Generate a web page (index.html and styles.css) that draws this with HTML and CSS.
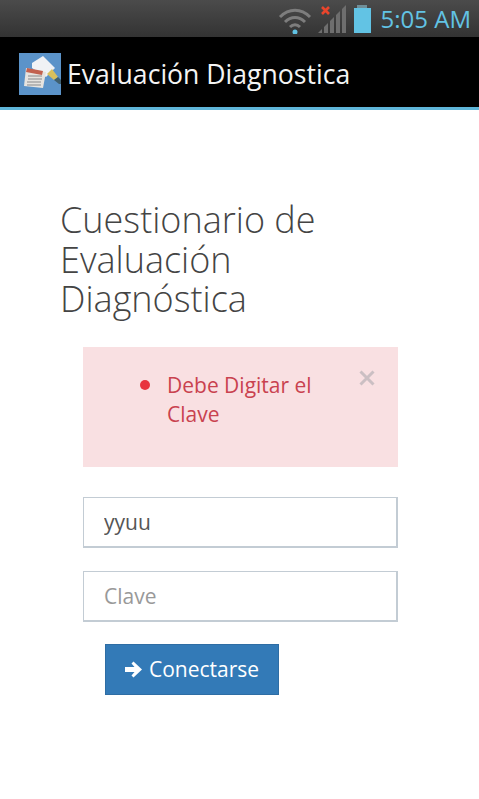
FILE: index.html
```html
<!DOCTYPE html>
<html lang="es">
<head>
  <meta charset="UTF-8" />
  <title>Evaluación Diagnostica</title>
  <meta name="viewport" content="width=device-width, initial-scale=1.0" />
  <link rel="stylesheet" href="styles.css">
</head>
<body>

  <!-- Status bar -->
  <div class="status-bar">
    <svg class="wifi" width="34" height="28" viewBox="0 0 34 28" fill="none">
      <path d="M2 11C11 2 23 2 32 11" stroke="#7d7d7d" stroke-width="3"/>
      <path d="M7 16C13 10 21 10 27 16" stroke="#7d7d7d" stroke-width="3"/>
      <path d="M12 21C15 18 19 18 22 21" stroke="#7d7d7d" stroke-width="3"/>
      <circle cx="17" cy="26" r="2.5" fill="#62c3e4"/>
    </svg>
    <svg class="signal" width="30" height="30" viewBox="0 0 30 30">
      <path d="M1 28L5 24V28Z" fill="#6e6e6e"/>
      <path d="M7 28V22L11 18V28Z" fill="#6e6e6e"/>
      <path d="M13 28V16L17 12V28Z" fill="#6e6e6e"/>
      <path d="M19 28V10L23 6V28Z" fill="#6e6e6e"/>
      <path d="M25 28V4L29 0V28Z" fill="#6e6e6e"/>
      <path d="M5 2L12 9M12 2L5 9" stroke="#e8452c" stroke-width="2.6"/>
    </svg>
    <div class="battery">
      <span class="battery-cap"></span>
      <span class="battery-body"></span>
    </div>
    <span class="clock">5:05 AM</span>
  </div>

  <!-- Action bar -->
  <header class="action-bar">
    <svg class="app-icon" width="42" height="42" viewBox="0 0 42 42">
      <rect width="42" height="42" fill="#5b93c9"/>
      <path d="M13 10L24 3L36 15L27 24L13 15Z" fill="#f0f2f5"/>
      <path d="M7 15L27 19L24 35L5 33Z" fill="#e6e3df"/>
      <path d="M8 15L24 18L23 22L7 19Z" fill="#c2614f"/>
      <path d="M9 23H23M9 26H23M8 29H22M8 32H22" stroke="#a8a8a8" stroke-width="1.6"/>
      <path d="M28 21L33 16L39 24L35 27Z" fill="#d9c05c"/>
      <path d="M35 27L39 24L42 27V31H40Z" fill="#3f5f6e"/>
    </svg>
    <h1 class="app-title">Evaluación Diagnostica</h1>
  </header>

  <!-- Login form -->
  <main class="content">
    <h2 class="page-title">Cuestionario de Evaluación Diagnóstica</h2>

    <div class="form-box">
      <div class="alert">
        <span class="alert-dot"></span>
        <p class="alert-text">Debe Digitar el Clave</p>
        <svg class="alert-close" width="16" height="16" viewBox="0 0 16 16">
          <path d="M1.500 1.500L14.500 14.500M14.500 1.500L1.500 14.500" stroke="#cbbfc3" stroke-width="3"/>
        </svg>
      </div>

      <input class="field" type="text" value="yyuu" />
      <input class="field field-last" type="password" placeholder="Clave" />

      <button class="btn-login">
        <svg width="19" height="19" viewBox="0 0 19 19">
          <path d="M9.500 1.500L18 9.500L9.500 17.500L7.500 15.500L10.500 12H1V7H10.500L7.500 3.500Z" fill="#fff"/>
        </svg>
        Conectarse
      </button>
    </div>
  </main>

</body>
</html>
```

FILE: styles.css
```css
* {
  margin: 0;
  padding: 0;
  box-sizing: border-box;
  font-family: 'Open Sans', 'Noto Sans', sans-serif;
}

body {
  background: #fff;
  height: 799px;
  overflow: hidden;
}

.status-bar {
  height: 37px;
  background: linear-gradient(#4b4b4b, #333);
  display: flex;
  align-items: center;
  justify-content: flex-end;
  padding-right: 8px;
}

.wifi {
  margin-right: 5px;
  margin-top: 3px;
}

.signal {
  margin-right: 7px;
  margin-top: 2px;
}

.battery {
  display: flex;
  flex-direction: column;
  align-items: center;
  margin-right: 10px;
}

.battery-cap {
  width: 10px;
  height: 3px;
  background: #6f8e98;
}

.battery-body {
  width: 17px;
  height: 25px;
  background: #62c3e4;
}

.clock {
  color: #62c3e4;
  font-size: 24px;
}

.action-bar {
  height: 73px;
  background: #000;
  border-bottom: 3px solid #5fb6d9;
  display: flex;
  align-items: center;
  padding: 4px 0 0 19px;
  gap: 6px;
}

.app-title {
  color: #f4f4f4;
  font-size: 26.600px;
  font-weight: 400;
}

.content {
  padding: 90px 60px 0;
}

.page-title {
  font-size: 36px;
  line-height: 39.500px;
  font-weight: 300;
  color: #444;
  width: 320px;
}

.form-box {
  margin: 28px 21px 0 23px;
}

.alert {
  height: 120px;
  background: #f9e0e2;
  display: flex;
  align-items: flex-start;
  padding: 24px 23px 0 57px;
  margin-bottom: 30px;
}

.alert-dot {
  flex: none;
  width: 10px;
  height: 10px;
  margin-top: 9px;
  margin-right: 17px;
  border-radius: 50%;
  background: #e8343f;
}

.alert-text {
  flex: 1;
  color: #c9424f;
  font-size: 21px;
  line-height: 29px;
  padding-right: 25px;
}

.alert-close {
  flex: none;
  margin-top: -1px;
}

.field {
  display: block;
  width: 100%;
  height: 51px;
  padding: 0 20px;
  border: 2px solid #c3ccd4;
  border-width: 1px 2px 2px 1px;
  background: #fff;
  color: #555;
  font-size: 21px;
  margin-bottom: 23px;
  border-radius: 0;
  outline: none;
}

.field-last {
  margin-bottom: 22px;
}

.field::placeholder {
  color: #999;
}

.btn-login {
  display: flex;
  align-items: center;
  gap: 6px;
  width: 174px;
  height: 51px;
  margin-left: 22px;
  padding-left: 18px;
  background: #337ab7;
  border: 1px solid #2e6da4;
  color: #fff;
  font-size: 21px;
}
```
